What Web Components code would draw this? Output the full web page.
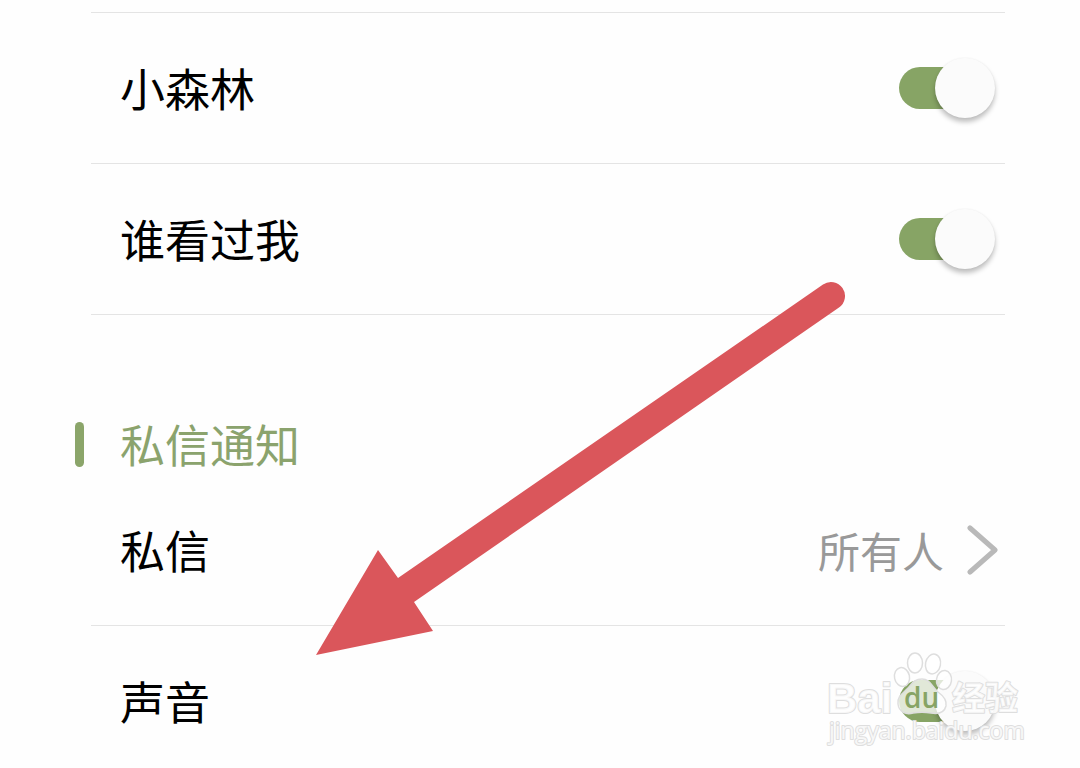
<!DOCTYPE html>
<html lang="zh-CN">
<head>
<meta charset="utf-8">
<meta name="viewport" content="width=device-width, initial-scale=1">
<title>通知设置</title>
<style>
  body { margin: 0; background: #fefefe; color: #000; font-family: "Noto Sans CJK SC", sans-serif; font-size: 45px; line-height: 64px; }
</style>
</head>
<body>
<settings-page>
  <settings-group>
    <switch-row label="小森林"></switch-row>
    <switch-row label="谁看过我"></switch-row>
  </settings-group>
  <settings-group heading="私信通知">
    <link-row label="私信" value="所有人"></link-row>
    <switch-row label="声音" class="last"></switch-row>
  </settings-group>
  <pointer-arrow slot="overlay"></pointer-arrow>
  <site-watermark slot="overlay"></site-watermark>
</settings-page>
<script>
const define = (name, render) => customElements.define(name, class extends HTMLElement {
  constructor() {
    super();
    this.attachShadow({ mode: "open" });
  }
  connectedCallback() {
    this.shadowRoot.innerHTML = render(this);
  }
});

define("settings-page", () => `
  <style>
    :host { display: block; position: relative; overflow: hidden; }
    main { padding: 12px 75px 0 91px; }
  </style>
  <main><slot></slot></main>
  <slot name="overlay"></slot>`);

define("settings-group", el => {
  const heading = el.getAttribute("heading");
  return `
  <style>
    :host { display: block; }
    section.plain { border-top: 1px solid #e4e4e4; }
    h2 { display: flex; align-items: center; gap: 36px; margin: 0 0 0 -16px; padding: 98px 0 0; height: 62px;
         font-size: 45px; line-height: 64px; font-weight: 400; color: #8ba36d; }
    h2::before { content: ""; width: 9px; height: 45px; border-radius: 5px; background: #8ba56a; }
  </style>
  <section class="${heading ? "titled" : "plain"}">
    ${heading ? `<h2>${heading}</h2>` : ""}
    <slot></slot>
  </section>`;
});

const rowStyle = `
  :host { display: block; border-bottom: 1px solid #e4e4e4; }
  :host(.last) { border-bottom: 0; }
  .row { display: flex; align-items: center; justify-content: space-between; padding: 43px 7px 43px 29px; min-height: 64px; color: inherit; text-decoration: none; }
  :host(.last) .row { padding-bottom: 32px; }`;

define("switch-row", el => `
  <style>
    ${rowStyle}
    input { appearance: none; display: flex; align-items: center; width: 96px; height: 60px; margin: 0 3px 0 0; cursor: pointer; }
    input::before { content: ""; width: 66px; height: 42px; border-radius: 21px; background: #87a465; }
    input::after { content: ""; width: 60px; height: 60px; margin-left: -30px; border-radius: 50%; background: #fbfbfb; box-shadow: 0 4px 5px rgba(0,0,0,.25), 0 0 2px rgba(0,0,0,.06); flex: none; }
    input:not(:checked) { flex-direction: row-reverse; }
  </style>
  <div class="row">
    <label for="toggle">${el.getAttribute("label")}</label>
    <input id="toggle" type="checkbox" role="switch" checked>
  </div>`);

define("link-row", el => `
  <style>
    ${rowStyle}
    .value { display: flex; align-items: center; gap: 22px; font-size: 42px; color: #999; }
    svg { display: block; }
  </style>
  <a class="row" href="#messages">
    <span>${el.getAttribute("label")}</span>
    <span class="value">${el.getAttribute("value")}
      <svg width="32" height="52" viewBox="0 0 32 52" fill="none" stroke="#b9b9b9" stroke-width="5" stroke-linecap="round" stroke-linejoin="round" aria-hidden="true"><path d="M4 4L29 26L4 48"/></svg>
    </span>
  </a>`);

define("pointer-arrow", () => `
  <style>
    :host { display: block; position: absolute; left: 316px; top: 280px; pointer-events: none; }
    svg { display: block; }
  </style>
  <svg width="532" height="378" viewBox="0 0 532 378" aria-hidden="true">
    <path fill="#da565b" d="M0 375L62 270L82 298L507 4.500A14 14 0 0 1 523 27.500L98 322L117 351Z"/>
  </svg>`);

define("site-watermark", () => `
  <style>
    :host { display: block; position: absolute; right: 50px; top: 644px; pointer-events: none; }
    svg { display: block; }
    text { fill: #fff; fill-opacity: .8; stroke: #dedede; stroke-width: 2px; stroke-linejoin: round; paint-order: stroke; }
    .bold { font: 700 42px "Liberation Sans", sans-serif; }
    .du { font: 600 28px "Open Sans", sans-serif; fill: #87a465; fill-opacity: 1; stroke: none; }
    .cjk { font: 700 33px "Noto Sans CJK SC", sans-serif; }
    .url { font: 400 23px "Open Sans", sans-serif; }
  </style>
  <svg width="210" height="112" viewBox="0 0 210 112" aria-hidden="true">
    <g fill="#fff" fill-opacity=".75" stroke="#dedede" stroke-width="1.500">
      <ellipse cx="82" cy="33" rx="7.500" ry="9.500" transform="rotate(-12 82 33)"/>
      <ellipse cx="95" cy="19" rx="7.500" ry="10"/>
      <ellipse cx="113" cy="20" rx="7.500" ry="10" transform="rotate(12 113 20)"/>
      <ellipse cx="124" cy="36" rx="7.500" ry="9.500" transform="rotate(8 124 36)"/>
      <path d="M102 35C110 35 112 43 118 48C125 53 127 57 126 62C124 70 117 70 111 69C105 68 99 68 93 69C86 71 79 68 78 60C77 53 82 50 87 45C92 40 94 35 102 35Z"/>
    </g>
    <text class="bold" x="7" y="69">Bai</text>
    <text class="du" x="84" y="64">du</text>
    <text class="cjk" x="132" y="66">经验</text>
    <text class="url" x="9" y="95">jingyan.baidu.com</text>
  </svg>`);
</script>
</body>
</html>
